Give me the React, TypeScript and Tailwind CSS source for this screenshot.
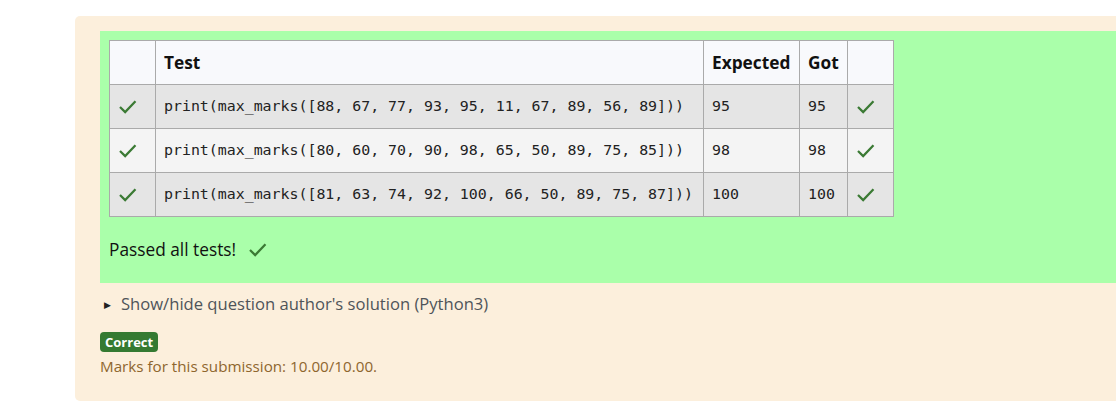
import React from 'react';

const rows = [
  { code: 'print(max_marks([88, 67, 77, 93, 95, 11, 67, 89, 56, 89]))', expected: '95', got: '95', bg: 'bg-[#e5e5e5]' },
  { code: 'print(max_marks([80, 60, 70, 90, 98, 65, 50, 89, 75, 85]))', expected: '98', got: '98', bg: 'bg-[#f4f4f4]' },
  { code: 'print(max_marks([81, 63, 74, 92, 100, 66, 50, 89, 75, 87]))', expected: '100', got: '100', bg: 'bg-[#e5e5e5]' },
];

const Check = ({ className = '' }: { className?: string }) => (
  <svg viewBox="0 0 20 16" className={className} fill="none">
    <path d="M2 8.5 L7.5 14 L18.5 2.5" stroke="#3b7a34" strokeWidth="2.4" />
  </svg>
);

const App = () => {
  return (
    <div className="w-[1116px] h-[416px] bg-white overflow-hidden pt-4 pl-[75px] font-['Open_Sans',sans-serif]">
      <div className="w-[1060px] h-[385px] bg-[#fcefdc] rounded-l-[5px] pt-[15px] pl-[25px]">
        <div className="bg-[#aaffaa] h-[252px] pl-[9px] pt-[9px]">
          <table className="border-collapse text-[#111]">
            <thead>
              <tr className="bg-[#f8f9fc] h-[44px]">
                <th className="border border-[#aaa] w-[46px]"></th>
                <th className="border border-[#aaa] w-[548px] text-left px-2 text-[17.3px] font-bold">Test</th>
                <th className="border border-[#aaa] w-[96px] text-left px-2 text-[17.3px] font-bold">Expected</th>
                <th className="border border-[#aaa] w-[48px] text-left px-2 text-[17.3px] font-bold">Got</th>
                <th className="border border-[#aaa] w-[46px]"></th>
              </tr>
            </thead>
            <tbody className="font-['DejaVu_Sans_Mono',monospace] text-[14.9px] text-[#222]">
              {rows.map((r, i) => (
                <tr key={i} className={`${r.bg} h-[44px]`}>
                  <td className="border border-[#aaa] pl-[8px]">
                    <Check className="block w-[19px] h-[15px]" />
                  </td>
                  <td className="border border-[#aaa] px-2 whitespace-nowrap">{r.code}</td>
                  <td className="border border-[#aaa] px-2">{r.expected}</td>
                  <td className="border border-[#aaa] px-2">{r.got}</td>
                  <td className="border border-[#aaa] pl-[8px]">
                    <Check className="block w-[19px] h-[15px]" />
                  </td>
                </tr>
              ))}
            </tbody>
          </table>
          <div className="mt-[20px] flex items-center gap-3 text-[17.3px] text-[#111]">
            <span>Passed all tests!</span>
            <Check className="w-[19px] h-[15px]" />
          </div>
        </div>
        <div className="mt-[9px] flex items-center gap-[10px] text-[16.6px] text-[#4f5459]">
          <span className="text-[9px] text-[#222] ml-[4px]">▶</span>
          <span>Show/hide question author's solution (Python3)</span>
        </div>
        <div className="mt-[12px]">
          <span className="inline-block bg-[#357a32] text-white text-[13px] font-bold leading-[20px] px-[5px] rounded-[4px]">Correct</span>
        </div>
        <div className="mt-[2px] text-[15.2px] text-[#8e662e]">Marks for this submission: 10.00/10.00.</div>
      </div>
    </div>
  );
};

export default App;
